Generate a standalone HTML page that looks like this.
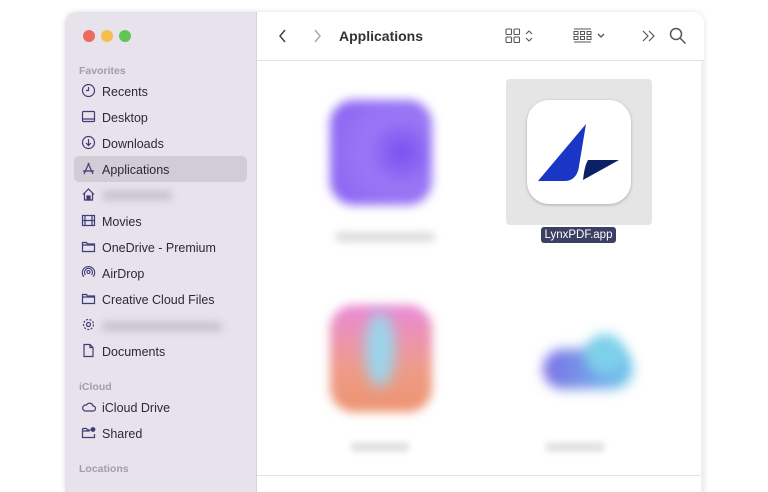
<!DOCTYPE html>
<html><head><style>
*{margin:0;padding:0;box-sizing:border-box}
body{width:768px;height:480px;background:#fff;position:relative;overflow:hidden;font-family:"Liberation Sans",sans-serif}
.win{position:absolute;left:65px;top:12px;width:639px;height:480px;border-radius:11px 11px 0 0;box-shadow:0 0 6px rgba(0,0,0,.12);overflow:hidden;background:#fff}
.side{position:absolute;left:0;top:0;width:192px;height:100%;background:#e7e2eb;border-right:1px solid #d8d4dc}
.dot{position:absolute;top:18px;width:12px;height:12px;border-radius:50%}
.hdr{position:absolute;left:14px;font-size:10.5px;font-weight:bold;color:#a19eaa}
.it{position:absolute;left:37px;font-size:12.5px;color:#2b2a33;margin-top:2px}
.ic{position:absolute;left:16px;width:15px;height:15px;margin-top:-1px}
.blur{filter:blur(4px)}
.sel{position:absolute;left:9px;top:144px;width:173px;height:26px;background:#d1ccd5;border-radius:5px}
.tb{position:absolute;left:192px;top:0;right:0;height:49px;border-bottom:1px solid #e2e2e2;background:#fff}
</style></head><body>
<div class="win">
<div class="side">
<div class="dot" style="left:18px;background:#ed6a5e"></div>
<div class="dot" style="left:36px;background:#f5bf4f"></div>
<div class="dot" style="left:54px;background:#61c554"></div>
<div class="hdr" style="top:53px">Favorites</div>
<div class="sel"></div>
<svg class="ic" style="top:72px" viewBox="0 0 15 15" fill="none" stroke="#3f3d77" stroke-width="1.2"><circle cx="7.5" cy="7.5" r="6"/><path d="M7.5 4v3.5H5"/></svg><div class="it" style="top:71px">Recents</div>
<svg class="ic" style="top:98px" viewBox="0 0 15 15" fill="none" stroke="#3f3d77" stroke-width="1.2"><rect x="1.5" y="2.5" width="12" height="10" rx="1"/><path d="M2 10h11"/></svg><div class="it" style="top:97px">Desktop</div>
<svg class="ic" style="top:124px" viewBox="0 0 15 15" fill="none" stroke="#3f3d77" stroke-width="1.2"><circle cx="7.5" cy="7.5" r="6"/><path d="M7.5 4v6M5 8l2.5 2.5L10 8"/></svg><div class="it" style="top:123px">Downloads</div>
<svg class="ic" style="top:150px" viewBox="0 0 15 15" fill="none" stroke="#3f3d77" stroke-width="1.2"><path d="M8 2L3 13M7 2l5 11M2 10h11"/></svg><div class="it" style="top:149px">Applications</div>
<svg class="ic" style="top:176px" viewBox="0 0 15 15" fill="none" stroke="#3f3d77" stroke-width="1.2"><path d="M2 7.5L7.5 2 13 7.5M3.5 6v7h8V6"/><rect x="6" y="9" width="3" height="4" fill="#3f3d77"/></svg><div class="it blur" style="top:177px;width:70px;height:9px;background:#c5c0ca;border-radius:4px"></div>
<svg class="ic" style="top:202px" viewBox="0 0 15 15" fill="none" stroke="#3f3d77" stroke-width="1.2"><rect x="1.5" y="2.5" width="12" height="10"/><path d="M4 2.5v10M11 2.5v10M1.5 7.5h12"/></svg><div class="it" style="top:201px">Movies</div>
<svg class="ic" style="top:228px" viewBox="0 0 15 15" fill="none" stroke="#3f3d77" stroke-width="1.2"><path d="M1.5 3.5h4l1 1.5h7v7.5h-12z M1.5 6h12"/></svg><div class="it" style="top:227px">OneDrive - Premium</div>
<svg class="ic" style="top:254px" viewBox="0 0 15 15" fill="none" stroke="#3f3d77" stroke-width="1.1"><circle cx="7.5" cy="7" r="1.5"/><path d="M4.5 10a4 4 0 1 1 6 0M2.8 11.8a6.2 6.2 0 1 1 9.4 0"/></svg><div class="it" style="top:253px">AirDrop</div>
<svg class="ic" style="top:280px" viewBox="0 0 15 15" fill="none" stroke="#3f3d77" stroke-width="1.2"><path d="M1.5 3.5h4l1 1.5h7v7.5h-12z M1.5 6h12"/></svg><div class="it" style="top:279px">Creative Cloud Files</div>
<svg class="ic" style="top:306px" viewBox="0 0 15 15" fill="none" stroke="#3f3d77" stroke-width="1.2"><circle cx="7.5" cy="7.5" r="2"/><circle cx="7.5" cy="7.5" r="5" stroke-dasharray="2 1.5"/></svg><div class="it blur" style="top:308px;width:120px;height:9px;background:#c5c0ca;border-radius:4px"></div>
<svg class="ic" style="top:332px" viewBox="0 0 15 15" fill="none" stroke="#3f3d77" stroke-width="1.2"><path d="M3 1.5h6l3 3v9H3z M9 1.5v3h3"/></svg><div class="it" style="top:331px">Documents</div>
<div class="hdr" style="top:369px">iCloud</div>
<svg class="ic" style="top:388px" viewBox="0 0 15 15" fill="none" stroke="#3f3d77" stroke-width="1.2"><path d="M4 12h8a2.5 2.5 0 0 0 0-5 3.5 3.5 0 0 0-6.5-1A3 3 0 0 0 4 12z"/></svg><div class="it" style="top:387px">iCloud Drive</div>
<svg class="ic" style="top:414px" viewBox="0 0 15 15" fill="none" stroke="#3f3d77" stroke-width="1.2"><path d="M1.5 3.5h4l1 1.5h3 M13.5 9v3.5h-12v-9 M1.5 6h7"/><circle cx="12" cy="4.5" r="1.8" fill="#3f3d77"/></svg><div class="it" style="top:413px">Shared</div>
<div class="hdr" style="top:451px">Locations</div>
</div>
<div class="tb">
<svg style="position:absolute;left:20px;top:16px" width="12" height="16" viewBox="0 0 12 16" fill="none" stroke="#444" stroke-width="1.5"><path d="M8 2L3 8l5 6"/></svg>
<svg style="position:absolute;left:54px;top:16px" width="12" height="16" viewBox="0 0 12 16" fill="none" stroke="#aaa" stroke-width="1.5"><path d="M4 2l5 6-5 6"/></svg>
<div style="position:absolute;left:82px;top:16px;font-size:14px;font-weight:bold;color:#333">Applications</div>
<svg style="position:absolute;left:248px;top:16px" width="32" height="16" viewBox="0 0 32 16" fill="none" stroke="#555" stroke-width="1.1"><rect x="1" y="1" width="5.5" height="5.5" rx="1"/><rect x="9" y="1" width="5.5" height="5.5" rx="1"/><rect x="1" y="9" width="5.5" height="5.5" rx="1"/><rect x="9" y="9" width="5.5" height="5.5" rx="1"/><path d="M21 6l3-3 3 3M21 10l3 3 3-3"/></svg>
<svg style="position:absolute;left:316px;top:16px" width="36" height="16" viewBox="0 0 36 16" fill="none" stroke="#555" stroke-width="1"><path d="M1 1h17M1 14h17"/><rect x="1" y="3.5" width="4" height="3"/><rect x="7.5" y="3.5" width="4" height="3"/><rect x="14" y="3.5" width="4" height="3"/><rect x="1" y="8.5" width="4" height="3"/><rect x="7.5" y="8.5" width="4" height="3"/><rect x="14" y="8.5" width="4" height="3"/><path d="M25 6l3 3 3-3" stroke-width="1.3"/></svg>
<svg style="position:absolute;left:384px;top:17px" width="16" height="14" viewBox="0 0 16 14" fill="none" stroke="#555" stroke-width="1.2"><path d="M2 2l5 5-5 5M8 2l5 5-5 5"/></svg>
<svg style="position:absolute;left:412px;top:15px" width="18" height="18" viewBox="0 0 18 18" fill="none" stroke="#555" stroke-width="1.5"><circle cx="7" cy="7" r="5.5"/><path d="M11 11l5.5 5.5"/></svg>
</div>
<!-- content -->
<div class="blur" style="position:absolute;left:265px;top:88px;width:102px;height:105px;border-radius:24px;background:radial-gradient(circle at 70% 50%,#7a4ff0,#9a78f5 40%,#8a60f3);filter:blur(5px)"></div>
<div class="blur" style="position:absolute;left:270px;top:220px;width:100px;height:10px;background:#ddd;border-radius:5px"></div>
<div style="position:absolute;left:441px;top:67px;width:146px;height:146px;background:#e5e5e5;border-radius:4px"></div>
<div style="position:absolute;left:462px;top:88px;width:104px;height:104px;background:#fff;border-radius:22px;box-shadow:0 1px 3px rgba(0,0,0,.25)"></div>
<svg style="position:absolute;left:462px;top:88px" width="104" height="104" viewBox="0 0 104 104"><path d="M59 24L11 81H38C46 81 51 75 52 66Z" fill="#1a36c4"/><path d="M61 60H92L56 80C57 72 58 65 61 60Z" fill="#0b2067"/></svg>
<div style="position:absolute;left:476px;top:215px;width:75px;height:16px;background:#3c3f64;border-radius:3px;color:#fff;font-size:11.5px;text-align:center;line-height:16px">LynxPDF.app</div>
<div style="position:absolute;left:265px;top:293px;width:102px;height:107px;border-radius:24px;background:linear-gradient(#e98ad8,#ee9c88 60%,#ee9370);filter:blur(5px)"></div>
<div style="position:absolute;left:300px;top:300px;width:30px;height:75px;border-radius:50%;background:#9bd4ec;filter:blur(7px)"></div>
<div style="position:absolute;left:285px;top:430px;width:60px;height:10px;background:#e3e3e3;border-radius:5px;filter:blur(3px)"></div>
<div style="position:absolute;left:478px;top:337px;width:90px;height:40px;border-radius:20px;background:linear-gradient(90deg,#7b6de6,#6fcbea);filter:blur(6px)"></div>
<div style="position:absolute;left:520px;top:322px;width:40px;height:40px;border-radius:50%;background:#7dd0ea;filter:blur(6px)"></div>
<div style="position:absolute;left:480px;top:430px;width:60px;height:10px;background:#e3e3e3;border-radius:5px;filter:blur(3px)"></div>
<div style="position:absolute;left:192px;top:463px;right:0;height:1px;background:#e4e4e4"></div>
<div style="position:absolute;right:0;top:49px;width:3px;bottom:0;background:#f0f0f0"></div>
</div>
</body></html>
